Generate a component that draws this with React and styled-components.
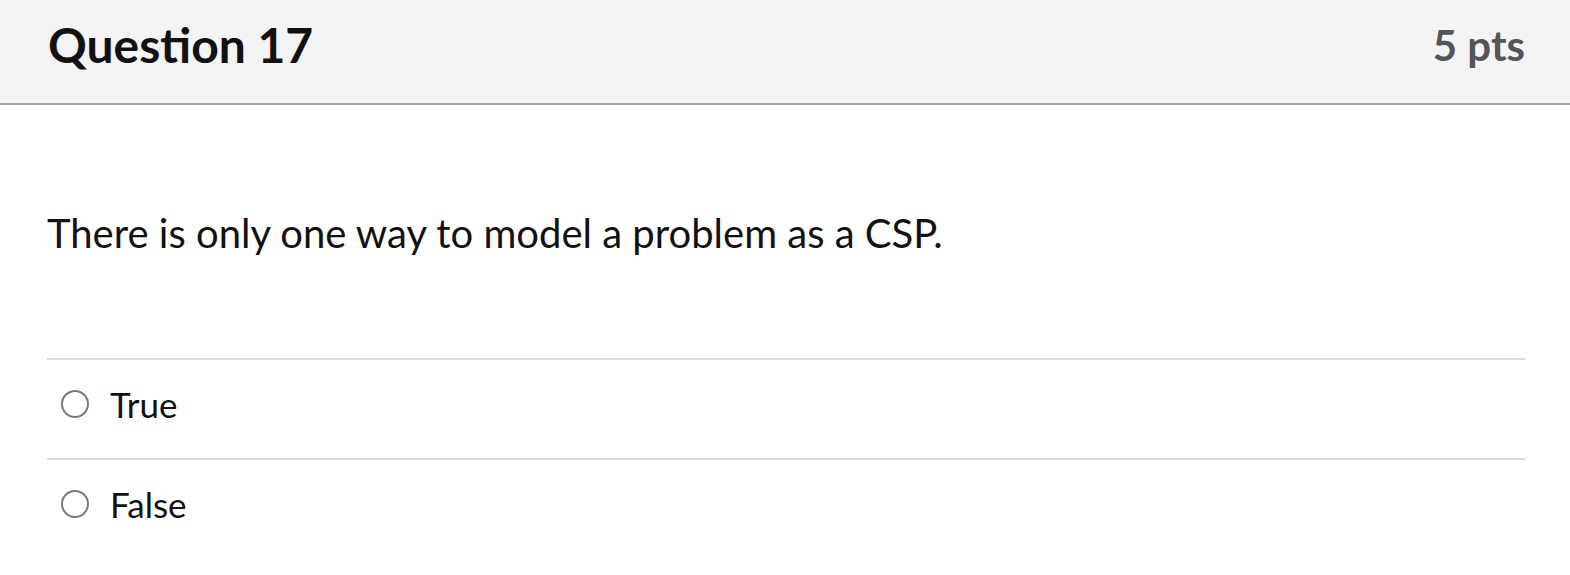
import React from 'react';
import styled, { createGlobalStyle } from 'styled-components';

const GlobalStyle = createGlobalStyle`
    body {
        margin: 0;
        background: #ffffff;
        font-family: Lato, "Open Sans", sans-serif;
        color: #111111;
    }
`;

const answers = ['True', 'False'];

function App() {
    return (
        <QuestionCard>
            <GlobalStyle />
            <QuestionHeader>
                <QuestionTitle>Question 17</QuestionTitle>
                <QuestionPoints>5 pts</QuestionPoints>
            </QuestionHeader>
            <QuestionBody>
                <QuestionText>There is only one way to model a problem as a CSP.</QuestionText>
                <AnswerList>
                    {answers.map((answer) => (
                        <AnswerRow key={answer}>
                            <RadioCircle />
                            <AnswerLabel>{answer}</AnswerLabel>
                        </AnswerRow>
                    ))}
                </AnswerList>
            </QuestionBody>
        </QuestionCard>
    );
}

const QuestionCard = styled.div`
    width: 1570px;
    height: 575px;
    background: #ffffff;
`;

const QuestionHeader = styled.div`
    display: flex;
    justify-content: space-between;
    align-items: center;
    box-sizing: border-box;
    height: 105px;
    padding: 0 45px 14px 48px;
    background: #f4f4f4;
    border-bottom: 2px solid #a6a6a6;
`;

const QuestionTitle = styled.div`
    font-size: 48px;
    font-weight: 700;
    color: #111111;
`;

const QuestionPoints = styled.div`
    font-size: 42px;
    font-weight: 700;
    color: #555555;
`;

const QuestionBody = styled.div`
    padding: 0 45px 0 47px;
`;

const QuestionText = styled.div`
    margin-top: 104px;
    font-size: 40px;
    line-height: 1.2;
    color: #111111;
`;

const AnswerList = styled.div`
    margin-top: 101px;
`;

const AnswerRow = styled.div`
    display: flex;
    align-items: center;
    box-sizing: border-box;
    height: 100px;
    padding: 0 0 10px 14px;
    border-top: 2px solid #dcdcdc;
`;

const RadioCircle = styled.span`
    box-sizing: border-box;
    width: 28px;
    height: 28px;
    border: 2.5px solid #7a7a7a;
    border-radius: 50%;
    background: #ffffff;
    flex-shrink: 0;
`;

const AnswerLabel = styled.span`
    margin-left: 21px;
    font-size: 35px;
    color: #111111;
`;

export default App;
